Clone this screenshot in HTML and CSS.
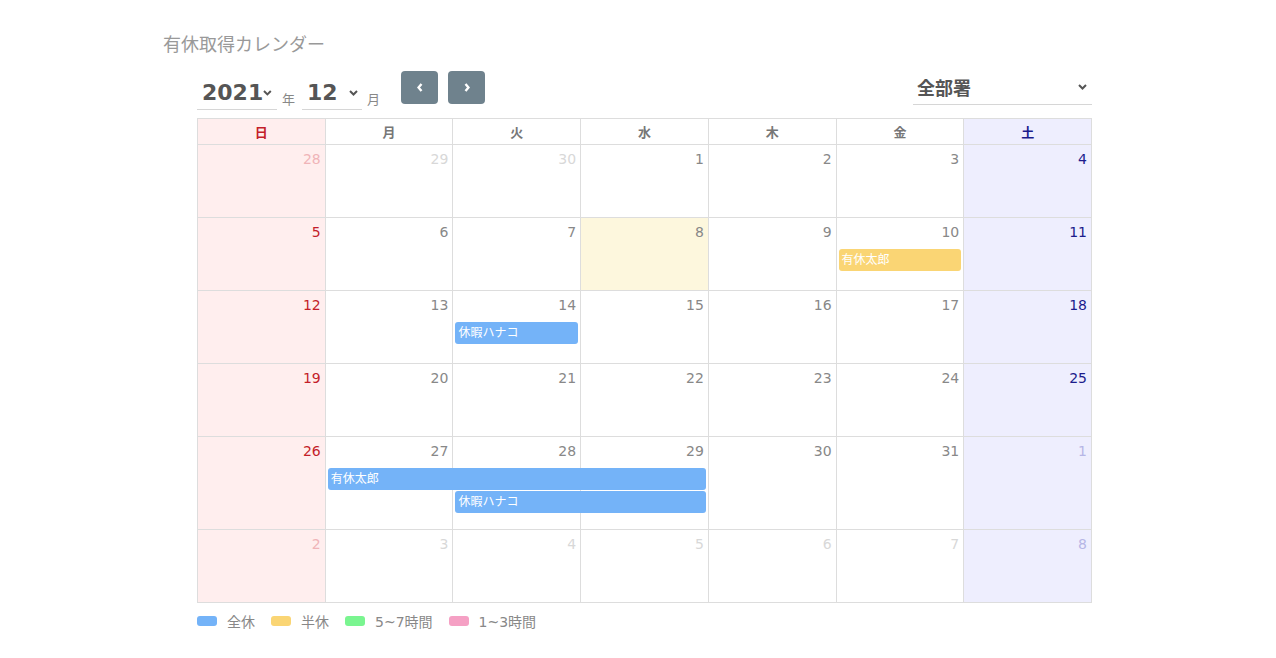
FILE: index.html
```html
<!DOCTYPE html>
<html lang="ja">
<head>
    <meta charset="UTF-8">
    <meta name="viewport" content="width=device-width, initial-scale=1.0">
    <title>有休取得カレンダー</title>
    <link rel="stylesheet" href="styles.css">
</head>
<body>
    <div class="page">
        <h1 class="title">有休取得カレンダー</h1>
        <div class="board">
            <div class="toolbar">
                <div class="period">
                    <div class="picker year">
                        <span>2021</span>
                        <svg class="caret" width="9" height="6" viewBox="0 0 9 6"><polyline points="1,1 4.5,4.5 8,1" /></svg>
                    </div>
                    <span class="unit">年</span>
                    <div class="picker month">
                        <span>12</span>
                        <svg class="caret" width="9" height="6" viewBox="0 0 9 6"><polyline points="1,1 4.5,4.5 8,1" /></svg>
                    </div>
                    <span class="unit">月</span>
                    <button class="nav prev" type="button">
                        <svg width="6" height="9" viewBox="0 0 6 9"><polyline points="4.5,1 1.5,4.5 4.5,8" /></svg>
                    </button>
                    <button class="nav next" type="button">
                        <svg width="6" height="9" viewBox="0 0 6 9"><polyline points="1.5,1 4.5,4.5 1.5,8" /></svg>
                    </button>
                </div>
                <div class="picker dept">
                    <span>全部署</span>
                    <svg class="caret" width="9" height="6" viewBox="0 0 9 6"><polyline points="1,1 4.5,4.5 8,1" /></svg>
                </div>
            </div>

            <div class="calendar">
                <div class="weekdays">
                    <div class="wd sun">日</div>
                    <div class="wd">月</div>
                    <div class="wd">火</div>
                    <div class="wd">水</div>
                    <div class="wd">木</div>
                    <div class="wd">金</div>
                    <div class="wd sat">土</div>
                </div>

                <div class="week">
                    <div class="day sun other">28</div>
                    <div class="day other">29</div>
                    <div class="day other">30</div>
                    <div class="day">1</div>
                    <div class="day">2</div>
                    <div class="day">3</div>
                    <div class="day sat">4</div>
                </div>

                <div class="week">
                    <div class="day sun">5</div>
                    <div class="day">6</div>
                    <div class="day">7</div>
                    <div class="day today">8</div>
                    <div class="day">9</div>
                    <div class="day">10</div>
                    <div class="day sat">11</div>
                    <div class="event half" style="grid-column: 6 / span 1; grid-row: 2;">有休太郎</div>
                </div>

                <div class="week">
                    <div class="day sun">12</div>
                    <div class="day">13</div>
                    <div class="day">14</div>
                    <div class="day">15</div>
                    <div class="day">16</div>
                    <div class="day">17</div>
                    <div class="day sat">18</div>
                    <div class="event full" style="grid-column: 3 / span 1; grid-row: 2;">休暇ハナコ</div>
                </div>

                <div class="week">
                    <div class="day sun">19</div>
                    <div class="day">20</div>
                    <div class="day">21</div>
                    <div class="day">22</div>
                    <div class="day">23</div>
                    <div class="day">24</div>
                    <div class="day sat">25</div>
                </div>

                <div class="week">
                    <div class="day sun">26</div>
                    <div class="day">27</div>
                    <div class="day">28</div>
                    <div class="day">29</div>
                    <div class="day">30</div>
                    <div class="day">31</div>
                    <div class="day sat other">1</div>
                    <div class="event full" style="grid-column: 2 / span 3; grid-row: 2;">有休太郎</div>
                    <div class="event full" style="grid-column: 3 / span 2; grid-row: 3;">休暇ハナコ</div>
                </div>

                <div class="week">
                    <div class="day sun other">2</div>
                    <div class="day other">3</div>
                    <div class="day other">4</div>
                    <div class="day other">5</div>
                    <div class="day other">6</div>
                    <div class="day other">7</div>
                    <div class="day sat other">8</div>
                </div>
            </div>

            <div class="legend">
                <span class="swatch full"></span><span class="label">全休</span>
                <span class="swatch half"></span><span class="label">半休</span>
                <span class="swatch hours"></span><span class="label">5~7時間</span>
                <span class="swatch short"></span><span class="label">1~3時間</span>
            </div>
        </div>
    </div>
</body>
</html>
```

FILE: styles.css
```css
* {
    margin: 0;
    padding: 0;
    box-sizing: border-box;
    font-family: "DejaVu Sans", "Noto Sans CJK JP", sans-serif;
}
body {
    background-color: #ffffff;
    color: #888;
}
.page {
    padding: 31px 0 40px 163px;
}
.title {
    font-size: 18px;
    font-weight: normal;
    line-height: 24px;
    color: #999;
    font-family: "Noto Sans CJK JP", sans-serif;
}
.board {
    margin-left: 34px;
    width: 895px;
}

/* toolbar */
.toolbar {
    display: flex;
    justify-content: space-between;
    align-items: flex-start;
    margin-top: 16px;
    height: 39px;
}
.period {
    display: flex;
    align-items: flex-end;
    height: 39px;
}
.picker {
    display: flex;
    align-items: center;
    justify-content: space-between;
    border-bottom: 1px solid #d6d6d6;
    color: #555;
    font-weight: bold;
}
.picker .caret polyline {
    fill: none;
    stroke: #555;
    stroke-width: 2;
}
.year {
    width: 80px;
    height: 39px;
    padding: 5px 5px 0 5px;
    font-size: 22px;
}
.month {
    width: 60px;
    height: 39px;
    padding: 5px 4px 0 5px;
    font-size: 22px;
}
.unit {
    font-family: "Noto Sans CJK JP", sans-serif;
    font-size: 13px;
    color: #888;
    margin: 0 7px 2px 5px;
}
.nav {
    align-self: flex-start;
    width: 37px;
    height: 33px;
    border: none;
    border-radius: 4px;
    background: #6f828d;
    display: flex;
    align-items: center;
    justify-content: center;
    cursor: pointer;
}
.nav polyline {
    fill: none;
    stroke: #fff;
    stroke-width: 2.4;
}
.prev {
    margin-left: 14px;
}
.next {
    margin-left: 10px;
}
.dept {
    width: 179px;
    height: 34px;
    padding: 0 5px 2px 4px;
    font-size: 18px;
    font-family: "Noto Sans CJK JP", sans-serif;
}

/* calendar grid */
.calendar {
    margin-top: 8px;
    border-top: 1px solid #ddd;
    border-left: 1px solid #ddd;
}
.weekdays,
.week {
    display: grid;
    grid-template-columns: repeat(7, 1fr);
}
.wd {
    height: 26px;
    line-height: 25px;
    text-align: center;
    font-size: 13px;
    font-weight: bold;
    color: #777;
    border-right: 1px solid #ddd;
    border-bottom: 1px solid #ddd;
    font-family: "Noto Sans CJK JP", sans-serif;
}
.week {
    grid-template-rows: 31px auto auto minmax(16px, 1fr);
    min-height: 73px;
}
.day {
    grid-row: 1 / -1;
    border-right: 1px solid #ddd;
    border-bottom: 1px solid #ddd;
    padding: 4px 4px 0 0;
    text-align: right;
    font-size: 14px;
    line-height: 20px;
    color: #888;
}
.day:nth-child(1) { grid-column: 1; }
.day:nth-child(2) { grid-column: 2; }
.day:nth-child(3) { grid-column: 3; }
.day:nth-child(4) { grid-column: 4; }
.day:nth-child(5) { grid-column: 5; }
.day:nth-child(6) { grid-column: 6; }
.day:nth-child(7) { grid-column: 7; }

.sun {
    background: #ffeeee;
    color: #c41e2a;
}
.sat {
    background: #eeeefe;
    color: #1c1c8c;
}
.day.other {
    color: #d8d8d8;
}
.day.sun.other {
    color: #f0b4b8;
}
.day.sat.other {
    color: #b6b6e6;
}
.day.today {
    background: #fdf7dd;
}

/* leave bars */
.event {
    height: 22px;
    margin: 0 3px 1px 2px;
    padding-left: 3px;
    border-radius: 3px;
    font-size: 12px;
    line-height: 20px;
    color: #fff;
    white-space: nowrap;
    overflow: hidden;
    font-family: "Noto Sans CJK JP", sans-serif;
}
.event.full,
.swatch.full {
    background: #74b3f8;
}
.event.half,
.swatch.half {
    background: #fad574;
}
.swatch.hours {
    background: #7af590;
}
.swatch.short {
    background: #f5a0c4;
}

/* legend */
.legend {
    display: flex;
    align-items: center;
    margin-top: 8px;
    font-size: 14px;
    color: #888;
}
.swatch {
    width: 20px;
    height: 10px;
    border-radius: 3px;
    margin-right: 10px;
}
.label {
    margin-right: 16px;
}
```
